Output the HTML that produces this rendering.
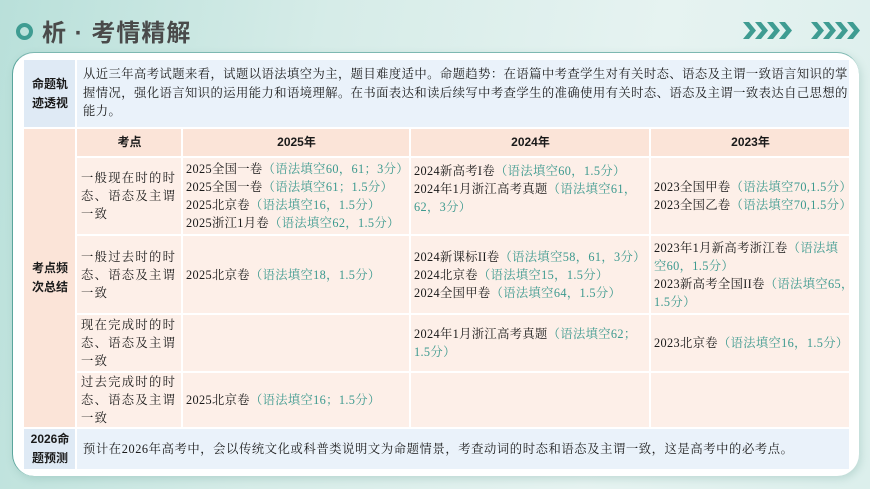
<!DOCTYPE html>
<html><head><meta charset="utf-8"><style>
*{margin:0;padding:0;box-sizing:border-box}
body{width:870px;height:489px;overflow:hidden;position:relative;background:linear-gradient(100deg,#b9e0da 0%,#d6ece8 35%,#e6f3f1 70%,#dcefec 100%);font-family:"Liberation Serif","Noto Serif CJK SC",serif;color:#1a1a1a}
.card{position:absolute;left:12px;top:52px;width:847px;height:424px;background:#fff;border-radius:22px;border-left:1.5px solid #5aa59c;border-top:1.5px solid #7db8b1;box-shadow:2px 3px 8px rgba(90,150,140,.25)}
.c{position:absolute;font-size:12.3px;line-height:18px;padding:0 2px 0 3px;letter-spacing:0.35px}
.c div{white-space:nowrap}
.b{font-family:"Liberation Sans","Noto Sans CJK SC",sans-serif;font-weight:bold;text-align:center;display:flex;align-items:center;justify-content:center;font-size:12px;line-height:19px;letter-spacing:0}
.blue{background:#dfeaf5}.lb{background:#eaf2fa}.pk{background:#fbe4d8}.cl{background:#fdefe8}
.v{display:flex;flex-direction:column;justify-content:center}
.g{color:#3d9a8f}
.t{letter-spacing:1.3px;font-size:12.3px;padding:0 2px 0 4px}
</style></head><body>
<div style="position:absolute;left:16px;top:23px;width:17px;height:17px;border-radius:50%;border:4.5px solid #3f9c92"></div>
<div style="position:absolute;left:42px;top:13px;font-family:'Liberation Sans','Noto Sans CJK SC',sans-serif;font-weight:bold;font-size:24px;color:#4a4a4a;letter-spacing:1px">析 · 考情精解</div>
<svg style="position:absolute;left:742px;top:21px" width="118" height="20" viewBox="0 0 118 20">
<g fill="#3f9c92">
<path d="M1 1h6l7 8.5-7 8.5h-6l7-8.5z"/><path d="M13 1h6l7 8.5-7 8.5h-6l7-8.5z"/><path d="M25 1h6l7 8.5-7 8.5h-6l7-8.5z"/><path d="M37 1h6l7 8.5-7 8.5h-6l7-8.5z"/>
<path d="M69 1h6l7 8.5-7 8.5h-6l7-8.5z"/><path d="M81 1h6l7 8.5-7 8.5h-6l7-8.5z"/><path d="M93 1h6l7 8.5-7 8.5h-6l7-8.5z"/><path d="M105 1h6l7 8.5-7 8.5h-6l7-8.5z"/>
</g></svg>
<div class="card"></div>

<div class="c b blue" style="left:24px;top:60px;width:51px;height:67px">命题轨<br>迹透视</div>
<div class="c lb" style="left:77px;top:60px;width:772px;height:67px;padding:5px 0 0 6px;line-height:18.5px;font-size:12.3px;letter-spacing:0.45px">从近三年高考试题来看，试题以语法填空为主，题目难度适中。命题趋势：在语篇中考查学生对有关时态、语态及主谓一致语言知识的掌握情况，强化语言知识的运用能力和语境理解。在书面表达和读后续写中考查学生的准确使用有关时态、语态及主谓一致表达自己思想的能力。</div>

<div class="c b pk" style="left:24px;top:129px;width:51px;height:298px">考点频<br>次总结</div>
<div class="c b pk" style="left:77px;top:129px;width:104px;height:27px">考点</div>
<div class="c b pk" style="left:183px;top:129px;width:226px;height:27px">2025年</div>
<div class="c b pk" style="left:411px;top:129px;width:238px;height:27px">2024年</div>
<div class="c b pk" style="left:651px;top:129px;width:198px;height:27px">2023年</div>

<div class="c cl v t" style="left:77px;top:158px;width:104px;height:76px">一般现在时的时态、语态及主谓一致</div>
<div class="c cl v" style="left:183px;top:158px;width:226px;height:76px"><div>2025全国一卷<span class="g">（语法填空60，61；3分）</span></div><div>2025全国一卷<span class="g">（语法填空61；1.5分）</span></div><div>2025北京卷<span class="g">（语法填空16，1.5分）</span></div><div>2025浙江1月卷<span class="g">（语法填空62，1.5分）</span></div></div>
<div class="c cl" style="left:411px;top:158px;width:238px;height:76px;padding-top:4px"><div>2024新高考I卷<span class="g">（语法填空60，1.5分）</span></div><div>2024年1月浙江高考真题<span class="g">（语法填空61，</span></div><div class="g">62，3分）</div></div>
<div class="c cl v" style="left:651px;top:158px;width:198px;height:76px"><div>2023全国甲卷<span class="g">（语法填空70,1.5分）</span></div><div>2023全国乙卷<span class="g">（语法填空70,1.5分）</span></div></div>

<div class="c cl v t" style="left:77px;top:236px;width:104px;height:77px">一般过去时的时态、语态及主谓一致</div>
<div class="c cl v" style="left:183px;top:236px;width:226px;height:77px"><div>2025北京卷<span class="g">（语法填空18，1.5分）</span></div></div>
<div class="c cl v" style="left:411px;top:236px;width:238px;height:77px"><div>2024新课标II卷<span class="g">（语法填空58，61，3分）</span></div><div>2024北京卷<span class="g">（语法填空15，1.5分）</span></div><div>2024全国甲卷<span class="g">（语法填空64，1.5分）</span></div></div>
<div class="c cl v" style="left:651px;top:236px;width:198px;height:77px"><div>2023年1月新高考浙江卷<span class="g">（语法填</span></div><div class="g">空60，1.5分）</div><div>2023新高考全国II卷<span class="g">（语法填空65，</span></div><div class="g">1.5分）</div></div>

<div class="c cl v t" style="left:77px;top:315px;width:104px;height:56px">现在完成时的时态、语态及主谓一致</div>
<div class="c cl" style="left:183px;top:315px;width:226px;height:56px"></div>
<div class="c cl v" style="left:411px;top:315px;width:238px;height:56px"><div>2024年1月浙江高考真题<span class="g">（语法填空62；</span></div><div class="g">1.5分）</div></div>
<div class="c cl v" style="left:651px;top:315px;width:198px;height:56px"><div>2023北京卷<span class="g">（语法填空16，1.5分）</span></div></div>

<div class="c cl v t" style="left:77px;top:373px;width:104px;height:54px">过去完成时的时态、语态及主谓一致</div>
<div class="c cl v" style="left:183px;top:373px;width:226px;height:54px"><div>2025北京卷<span class="g">（语法填空16；1.5分）</span></div></div>
<div class="c cl" style="left:411px;top:373px;width:238px;height:54px"></div>
<div class="c cl" style="left:651px;top:373px;width:198px;height:54px"></div>

<div class="c b blue" style="left:24px;top:429px;width:51px;height:40px">2026命<br>题预测</div>
<div class="c lb v" style="left:77px;top:429px;width:772px;height:40px;padding-left:6px;font-size:12.3px;letter-spacing:.6px">预计在2026年高考中，会以传统文化或科普类说明文为命题情景，考查动词的时态和语态及主谓一致，这是高考中的必考点。</div>
</body></html>
